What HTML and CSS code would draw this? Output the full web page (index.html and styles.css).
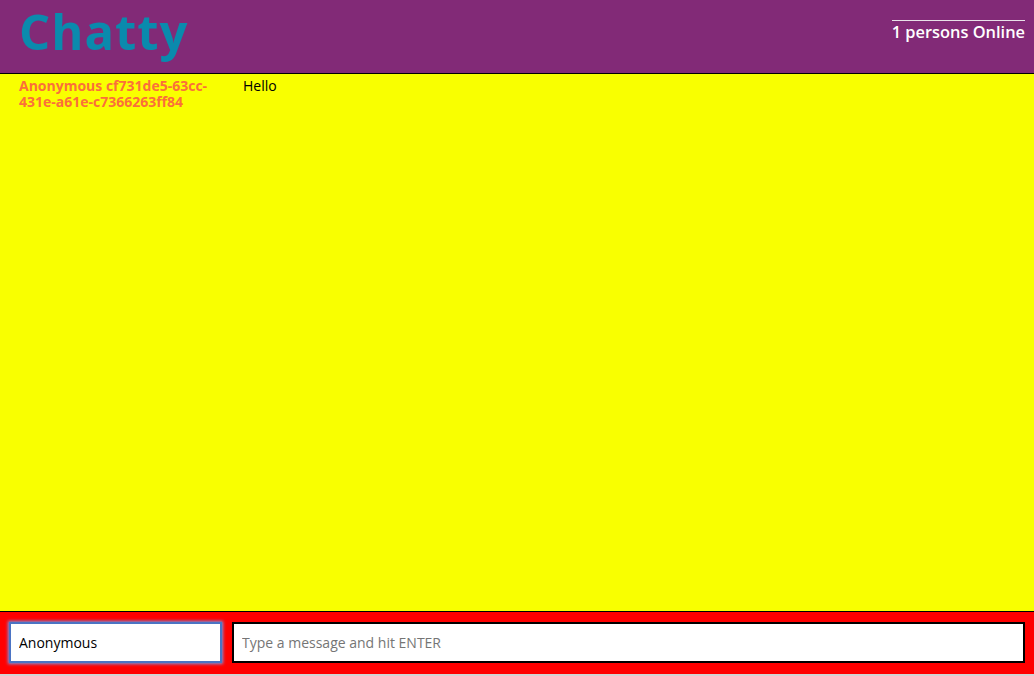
FILE: index.html
```html
<!DOCTYPE html>
<html>
<head>
<meta charset="utf-8">
<link rel="stylesheet" href="styles.css">
<title>Chatty</title>
</head>
<body>
<div class="app">
  <header class="navbar">
    <h1 class="brand">Chatty</h1>
    <div class="online">1 persons Online</div>
  </header>
  <main class="messages">
    <div class="message">
      <span class="username">Anonymous cf731de5-63cc-431e-a61e-c7366263ff84</span>
      <span class="content">Hello</span>
    </div>
  </main>
  <footer class="chatbar">
    <input class="name-input" type="text" value="Anonymous">
    <input class="msg-input" type="text" placeholder="Type a message and hit ENTER">
  </footer>
</div>
</body>
</html>
```

FILE: styles.css
```css
* { box-sizing: border-box; }
html, body { margin: 0; height: 100%; }
body {
  background: #d3d3d3;
  font-family: "Open Sans", "Liberation Sans", sans-serif;
}
.app {
  height: 674px;
  display: flex;
  flex-direction: column;
}
.navbar {
  height: 74px;
  flex: none;
  background: #822a77;
  border-bottom: 1px solid #000;
  display: flex;
  justify-content: space-between;
  align-items: flex-start;
  padding: 0 9px 0 19px;
}
.brand {
  margin: 0;
  font-size: 49px;
  font-weight: 700;
  color: #0a8aad;
  line-height: 62px;
  letter-spacing: 1px;
}
.online {
  margin-top: 20px;
  border-top: 1px solid #e8e0e8;
  color: #fff;
  font-size: 16.4px;
  font-weight: 600;
  line-height: 22px;
}
.messages {
  flex: 1;
  background: #f9ff00;
  padding: 4px 0 0 19px;
  overflow: hidden;
}
.message {
  display: flex;
  align-items: flex-start;
}
.username {
  width: 224px;
  flex: none;
  padding-right: 12px;
  color: #fb6f3a;
  font-size: 14px;
  font-weight: 700;
  line-height: 16px;
}
.content {
  font-size: 14px;
  line-height: 16px;
  color: #000;
}
.chatbar {
  flex: none;
  height: 63px;
  background: #ff0000;
  border-top: 1px solid #000;
  display: flex;
  gap: 10px;
  padding: 10px 9px 0 9px;
}
.name-input, .msg-input {
  height: 41px;
  font-family: "Open Sans", "Liberation Sans", sans-serif;
  font-size: 14px;
  background: #fff;
  outline: none;
  padding: 0 8px;
  color: #000;
}
.name-input {
  width: 213px;
  flex: none;
  border: 2px solid #4b74c4;
  box-shadow: 0 0 3px 1px #6f9be8;
}
.msg-input {
  flex: 1;
  border: 2px solid #000;
}
.msg-input::placeholder { color: #757575; }
```
